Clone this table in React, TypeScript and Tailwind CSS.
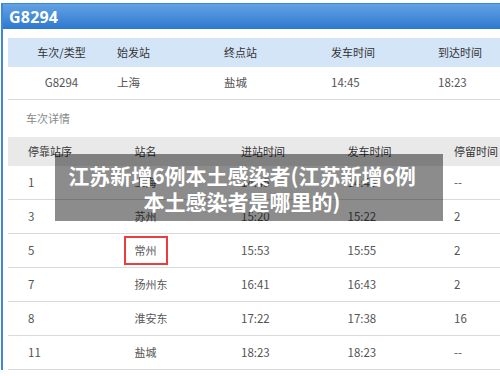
const font = { fontFamily: '"Noto Sans CJK SC", "Noto Sans", sans-serif' };

const trainHead = ["车次/类型", "始发站", "终点站", "发车时间", "到达时间"];
const trainRow = ["G8294", "上海", "盐城", "14:45", "18:23"];

const stopHead = ["停靠站序", "站名", "进站时间", "发车时间", "停留时间"];
const stops = [
  { no: "1", name: "上海", arrive: "14:45", depart: "14:45", stay: "--" },
  { no: "3", name: "苏州", arrive: "15:20", depart: "15:22", stay: "2" },
  { no: "5", name: "常州", arrive: "15:53", depart: "15:55", stay: "2", mark: true },
  { no: "7", name: "扬州东", arrive: "16:41", depart: "16:43", stay: "2" },
  { no: "8", name: "淮安东", arrive: "17:22", depart: "17:38", stay: "16" },
  { no: "11", name: "盐城", arrive: "18:23", depart: "18:23", stay: "--" },
];

export default function App() {
  return (
    <div
      className="relative h-[376px] w-[500px] overflow-hidden bg-white"
      style={font}
    >
      <div className="ml-[1px] mt-[3px] w-[560px] border-l-2 border-t border-[#3f88d9]">
        <div className="flex h-[25px] items-center bg-gradient-to-b from-[#62a2e4] to-[#2c78cf] pl-[6px]">
          <span className="font-['Open_Sans',sans-serif] text-[16px] font-bold tracking-[0.2px] text-white">
            G8294
          </span>
        </div>

        <div className="pl-[5px] pt-[9px]">
          {/* train summary */}
          <div className="flex h-[29px] items-center bg-[#d3e5f7] text-[11px] text-[#333]">
            {trainHead.map((h, i) => (
              <div
                key={h}
                className={i === 0 ? "w-[107px] text-center" : "w-[107px] pl-[2px]"}
              >
                {h}
              </div>
            ))}
          </div>
          <div className="flex h-[33px] items-center border-b border-[#dadada] text-[11.5px] text-[#555]">
            {trainRow.map((c, i) => (
              <div
                key={c}
                className={i === 0 ? "w-[107px] text-center" : "w-[107px] pl-[2px]"}
              >
                {c}
              </div>
            ))}
          </div>

          <div className="flex h-[37px] items-center pl-[18px] text-[11px] text-[#888]">
            车次详情
          </div>

          {/* stops */}
          <div className="flex h-[29px] items-center bg-[#e9e9e9] text-[11px] text-[#333]">
            {stopHead.map((h) => (
              <div key={h} className="w-[106.5px] pl-[20px]">
                {h}
              </div>
            ))}
          </div>
          {stops.map((s) => (
            <div
              key={s.no}
              className="flex h-[34px] items-center border-b border-[#dadada] text-[11.5px] text-[#555]"
            >
              <div className="w-[106.5px] pl-[20px]">{s.no}</div>
              <div className="w-[106.5px] pl-[20px] text-[11px]">
                {s.mark ? (
                  <span className="-ml-[11px] inline-block border-2 border-[#ee3b3b] px-[9px] py-[4px]">
                    {s.name}
                  </span>
                ) : (
                  s.name
                )}
              </div>
              <div className="w-[106.5px] pl-[20px]">{s.arrive}</div>
              <div className="w-[106.5px] pl-[20px]">{s.depart}</div>
              <div className="w-[106.5px] pl-[20px]">{s.stay}</div>
            </div>
          ))}
        </div>
      </div>

      {/* caption overlay */}
      <div className="absolute left-[55px] top-[154px] flex h-[67px] w-[388px] items-center justify-center bg-black/45 pr-[14px]">
        <p className="text-center text-[21px] font-bold leading-[26px] text-white">
          江苏新增6例本土感染者(江苏新增6例
          <br />
          本土感染者是哪里的)
        </p>
      </div>
    </div>
  );
}
